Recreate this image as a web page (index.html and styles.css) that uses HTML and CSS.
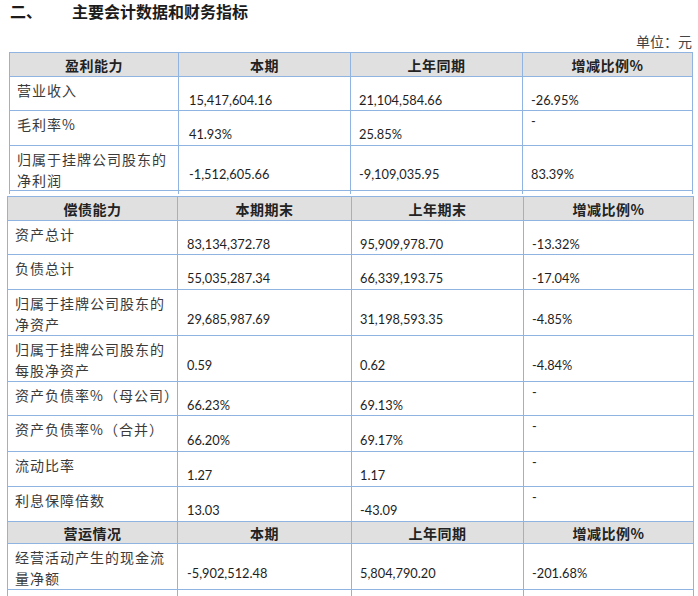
FILE: index.html
```html
<!DOCTYPE html>
<html lang="zh-CN">
<head>
<meta charset="utf-8">
<title>主要会计数据和财务指标</title>
<link rel="stylesheet" href="styles.css">
</head>
<body>
<h2 class="title"><span class="num">二、</span><span>主要会计数据和财务指标</span></h2>
<div class="unit">单位：元</div>

<table class="fin s1">
  <colgroup><col class="c1"><col class="c2"><col class="c3"><col class="c4"></colgroup>
  <tr class="h24 head"><th>盈利能力</th><th>本期</th><th>上年同期</th><th>增减比例%</th></tr>
  <tr class="h34"><td class="lbl">营业收入</td><td class="n">15,417,604.16</td><td class="n">21,104,584.66</td><td class="n">-26.95%</td></tr>
  <tr class="h35"><td class="lbl">毛利率%</td><td class="n">41.93%</td><td class="n">25.85%</td><td class="dash">-</td></tr>
  <tr class="h45"><td class="lbl">归属于挂牌公司股东的净利润</td><td class="n">-1,512,605.66</td><td class="n">-9,109,035.95</td><td class="n">83.39%</td></tr>
  <tr class="spacer"><td></td><td></td><td></td><td></td></tr>
</table>

<table class="fin s2">
  <colgroup><col class="c1"><col class="c2"><col class="c3"><col class="c4"></colgroup>
  <tr class="h24 head"><th>偿债能力</th><th>本期期末</th><th>上年期末</th><th>增减比例%</th></tr>
  <tr class="h34"><td class="lbl">资产总计</td><td class="n">83,134,372.78</td><td class="n">95,909,978.70</td><td class="n">-13.32%</td></tr>
  <tr class="h35"><td class="lbl">负债总计</td><td class="n">55,035,287.34</td><td class="n">66,339,193.75</td><td class="n">-17.04%</td></tr>
  <tr class="h46"><td class="lbl">归属于挂牌公司股东的净资产</td><td class="n">29,685,987.69</td><td class="n">31,198,593.35</td><td class="n">-4.85%</td></tr>
  <tr class="h46"><td class="lbl">归属于挂牌公司股东的每股净资产</td><td class="n">0.59</td><td class="n">0.62</td><td class="n">-4.84%</td></tr>
  <tr class="h34"><td class="lbl">资产负债率%（母公司）</td><td class="n">66.23%</td><td class="n">69.13%</td><td class="dash">-</td></tr>
  <tr class="h36"><td class="lbl">资产负债率%（合并）</td><td class="n">66.20%</td><td class="n">69.17%</td><td class="dash">-</td></tr>
  <tr class="h35"><td class="lbl">流动比率</td><td class="n">1.27</td><td class="n">1.17</td><td class="dash">-</td></tr>
  <tr class="h35"><td class="lbl">利息保障倍数</td><td class="n">13.03</td><td class="n">-43.09</td><td class="dash">-</td></tr>
  <tr class="h22 head"><th>营运情况</th><th>本期</th><th>上年同期</th><th>增减比例%</th></tr>
  <tr class="h46"><td class="lbl">经营活动产生的现金流量净额</td><td class="n">-5,902,512.48</td><td class="n">5,804,790.20</td><td class="n">-201.68%</td></tr>
  <tr class="h34"><td class="lbl"></td><td class="n"></td><td class="n"></td><td class="n"></td></tr>
</table>
</body>
</html>
```

FILE: styles.css
```css
html, body {
  margin: 0;
  padding: 0;
  background: #ffffff;
}
body {
  width: 698px;
  font-family: "Noto Sans CJK SC", "Noto Sans", sans-serif;
  color: #333333;
}
.title {
  margin: 0;
  padding-left: 10px;
  font-size: 16px;
  line-height: 23px;
  font-weight: 700;
  color: #1c1c1c;
  display: flex;
}
.title .num {
  width: 62px;
}
.unit {
  margin-top: 8px;
  padding-right: 6px;
  text-align: right;
  font-size: 14px;
  line-height: 21px;
  color: #444444;
}
.fin {
  border-collapse: collapse;
  table-layout: fixed;
}
.fin th,
.fin td {
  border: 1px solid #8fb4e2;
  padding: 0;
  font-size: 14px;
  line-height: 20px;
}
.fin th {
  background: #e0e0e0;
  font-weight: 700;
  color: #222222;
  text-align: center;
  vertical-align: middle;
  letter-spacing: 0.5px;
}
.fin .lbl {
  vertical-align: top;
  padding: 3px 4px 0 7px;
  line-height: 20.5px;
  letter-spacing: 1px;
  color: #3a3a3a;
}
.fin .n {
  vertical-align: middle;
  padding: 12px 4px 0 8px;
  line-height: 18px;
  font-family: Lato, "Open Sans", sans-serif;
  font-size: 12.8px;
  color: #1e1e1e;
}
.fin .dash {
  vertical-align: top;
  padding: 1px 4px 0 8px;
  line-height: 18px;
  font-family: Lato, "Open Sans", sans-serif;
  font-size: 12.8px;
  color: #1e1e1e;
}
.s1 {
  margin-left: 9px;
}
.s1 .c1 { width: 169px; }
.s1 .c2 { width: 172px; }
.s1 .c3 { width: 172px; }
.s1 .c4 { width: 170px; }
.s1 td.n:nth-child(2) { padding-left: 10px; }
.s2 {
  margin-left: 7px;
  margin-top: 2px;
}
.s2 .c1 { width: 170px; }
.s2 .c2 { width: 174px; }
.s2 .c3 { width: 172px; }
.s2 .c4 { width: 170px; }
.s2 td.n:nth-child(2) { padding-left: 9px; }
.h22 { height: 22px; }
.h24 { height: 24px; }
.h34 { height: 34px; }
.h35 { height: 35px; }
.h36 { height: 36px; }
.h45 { height: 45px; }
.h46 { height: 46px; }
.spacer td {
  height: 3px;
  padding: 0;
  line-height: 0;
  font-size: 0;
  border-bottom: hidden;
}
```
